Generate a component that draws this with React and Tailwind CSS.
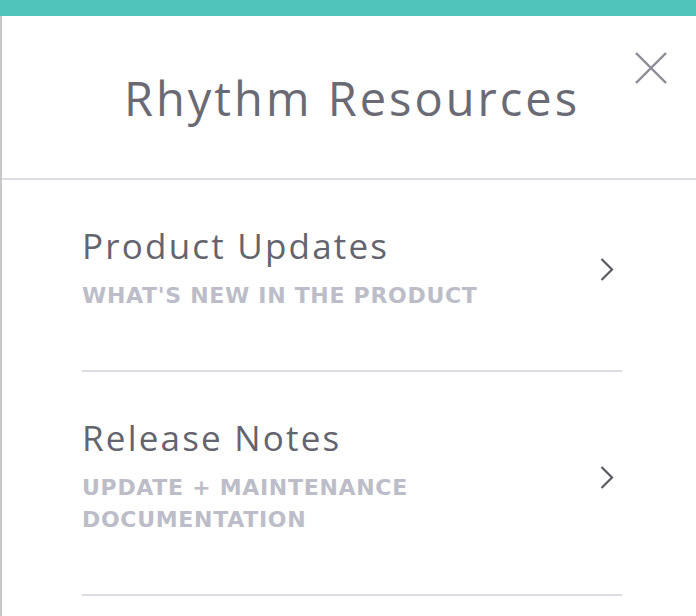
import React from "react";

function Chevron() {
  return (
    <svg width="14" height="24" viewBox="0 0 14 24" className="shrink-0">
      <path d="M1.5 2 L12 12.5 L1.5 23" fill="none" stroke="#5a5a64" strokeWidth="2.2" />
    </svg>
  );
}

function Item({ title, lines }) {
  return (
    <div className="pt-[46px] pb-[58px] border-b-2 border-[#dcdce2] flex items-center justify-between">
      <div className="flex flex-col">
        <div className="text-[35px] leading-[40px] text-[#64646e] tracking-[2.2px]">{title}</div>
        <div
          className="mt-[14px] text-[22px] leading-[32px] font-bold text-[#bcbdc8] tracking-[0.7px]"
          style={{ fontFamily: "'DejaVu Sans', 'Open Sans', sans-serif" }}
        >
          {lines.map((l) => (
            <div key={l}>{l}</div>
          ))}
        </div>
      </div>
      <div className="mr-[8px]">
        <Chevron />
      </div>
    </div>
  );
}

export default function App() {
  return (
    <div
      className="w-[696px] h-[616px] overflow-hidden bg-[#c8c8c8] flex flex-col"
      style={{ fontFamily: "'Open Sans', 'Noto Sans', sans-serif" }}
    >
      <div className="h-[16px] bg-[#4fc2b9] shrink-0" />
      <div className="flex-1 ml-[2px] bg-white flex flex-col">
        <div className="relative h-[164px] shrink-0 border-b-2 border-[#dcdce2] flex items-center justify-center pl-[6px]">
          <div className="text-[47px] text-[#6a6a74] mt-[2px] tracking-[3px]">Rhythm Resources</div>
          <svg className="absolute right-[28px] top-[35px]" width="34" height="34" viewBox="0 0 34 34">
            <path d="M2 2 L32 32 M32 2 L2 32" stroke="#8b8b96" strokeWidth="2.4" />
          </svg>
        </div>
        <div className="pl-[80px] pr-[74px] flex flex-col">
          <Item title="Product Updates" lines={["WHAT'S NEW IN THE PRODUCT"]} />
          <Item title="Release Notes" lines={["UPDATE + MAINTENANCE", "DOCUMENTATION"]} />
        </div>
      </div>
    </div>
  );
}
